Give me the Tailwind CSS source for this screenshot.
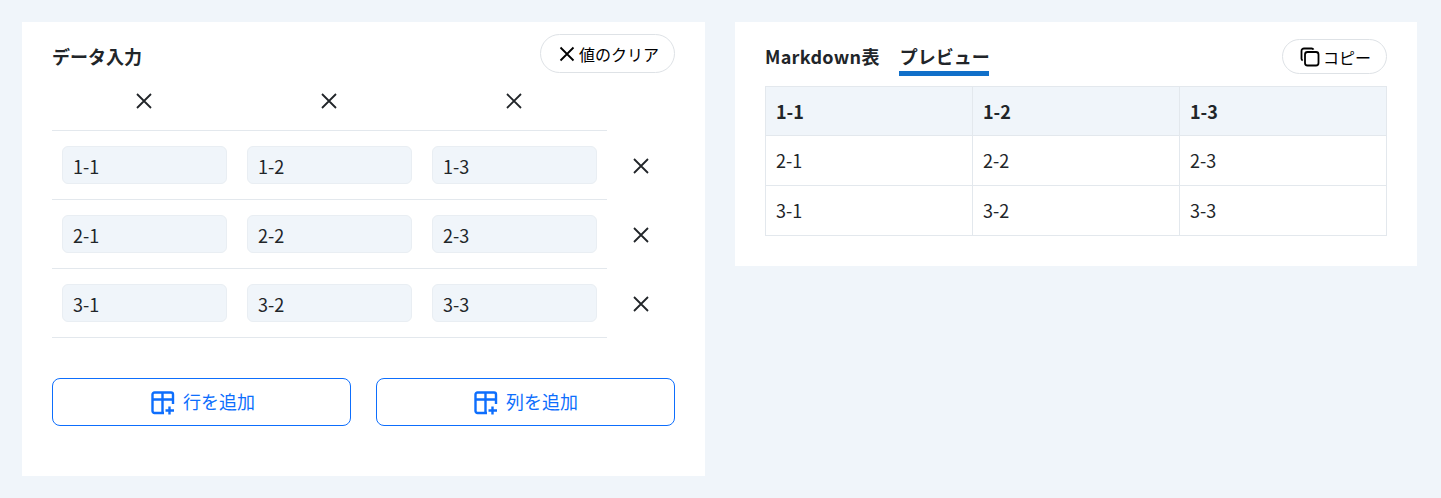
<!DOCTYPE html>
<html lang="ja">
<head>
<meta charset="utf-8">
<title>Markdown表</title>
<script src="https://cdn.jsdelivr.net/npm/@tailwindcss/browser@4"></script>
</head>
<body class="h-[498px] overflow-hidden bg-[#f0f5fa] font-['Noto_Sans_CJK_JP',sans-serif] text-[#212529]">
<main class="flex items-start gap-[30px] p-[22px]">

  <!-- data input -->
  <section class="h-[454px] w-[683px] bg-white px-[30px]">
    <div class="flex h-[65px] items-start justify-between">
      <h2 class="mt-[20px] text-[18px] leading-[28px] font-bold">データ入力</h2>
      <button type="button" class="mt-[12px] flex h-[39px] w-[135px] items-center justify-center gap-[3px] rounded-full border border-[#dee2e6] bg-white pl-[2px] text-[16px] text-black">
        <svg class="size-[18px]" viewBox="0 0 18 18" fill="none" stroke="currentColor" stroke-width="1.8"><path d="M2.5 2.5l13 13M15.5 2.5l-13 13"/></svg>
        値のクリア
      </button>
    </div>

    <div class="flex">
      <div class="w-[555px]">
        <div class="grid h-[44px] grid-cols-3 items-start border-b border-[#e3e8ed]">
          <span class="flex h-[30px] justify-center pt-[5px] pr-[1px]"><svg class="size-[18px] text-[#212529]" viewBox="0 0 18 18" fill="none" stroke="currentColor" stroke-width="1.8"><path d="M2 2l14 14M16 2L2 16"/></svg></span>
          <span class="flex h-[30px] justify-center pt-[5px] pr-[1px]"><svg class="size-[18px] text-[#212529]" viewBox="0 0 18 18" fill="none" stroke="currentColor" stroke-width="1.8"><path d="M2 2l14 14M16 2L2 16"/></svg></span>
          <span class="flex h-[30px] justify-center pt-[5px] pr-[1px]"><svg class="size-[18px] text-[#212529]" viewBox="0 0 18 18" fill="none" stroke="currentColor" stroke-width="1.8"><path d="M2 2l14 14M16 2L2 16"/></svg></span>
        </div>
        <div class="grid h-[69px] grid-cols-3 items-center gap-x-[20px] border-b border-[#e3e8ed] px-[10px]">
          <input value="1-1" class="h-[38px] w-full rounded-[6px] border border-[#e9eef3] bg-[#f0f5fa] px-[10px] pt-[2px] text-[18px] outline-none">
          <input value="1-2" class="h-[38px] w-full rounded-[6px] border border-[#e9eef3] bg-[#f0f5fa] px-[10px] pt-[2px] text-[18px] outline-none">
          <input value="1-3" class="h-[38px] w-full rounded-[6px] border border-[#e9eef3] bg-[#f0f5fa] px-[10px] pt-[2px] text-[18px] outline-none">
        </div>
        <div class="grid h-[69px] grid-cols-3 items-center gap-x-[20px] border-b border-[#e3e8ed] px-[10px]">
          <input value="2-1" class="h-[38px] w-full rounded-[6px] border border-[#e9eef3] bg-[#f0f5fa] px-[10px] pt-[2px] text-[18px] outline-none">
          <input value="2-2" class="h-[38px] w-full rounded-[6px] border border-[#e9eef3] bg-[#f0f5fa] px-[10px] pt-[2px] text-[18px] outline-none">
          <input value="2-3" class="h-[38px] w-full rounded-[6px] border border-[#e9eef3] bg-[#f0f5fa] px-[10px] pt-[2px] text-[18px] outline-none">
        </div>
        <div class="grid h-[69px] grid-cols-3 items-center gap-x-[20px] border-b border-[#e3e8ed] px-[10px]">
          <input value="3-1" class="h-[38px] w-full rounded-[6px] border border-[#e9eef3] bg-[#f0f5fa] px-[10px] pt-[2px] text-[18px] outline-none">
          <input value="3-2" class="h-[38px] w-full rounded-[6px] border border-[#e9eef3] bg-[#f0f5fa] px-[10px] pt-[2px] text-[18px] outline-none">
          <input value="3-3" class="h-[38px] w-full rounded-[6px] border border-[#e9eef3] bg-[#f0f5fa] px-[10px] pt-[2px] text-[18px] outline-none">
        </div>
      </div>
      <div class="flex w-[68px] flex-col pt-[44px]">
        <span class="flex h-[69px] items-center justify-center"><svg class="size-[18px]" viewBox="0 0 18 18" fill="none" stroke="currentColor" stroke-width="1.8"><path d="M2 2l14 14M16 2L2 16"/></svg></span>
        <span class="flex h-[69px] items-center justify-center"><svg class="size-[18px]" viewBox="0 0 18 18" fill="none" stroke="currentColor" stroke-width="1.8"><path d="M2 2l14 14M16 2L2 16"/></svg></span>
        <span class="flex h-[69px] items-center justify-center"><svg class="size-[18px]" viewBox="0 0 18 18" fill="none" stroke="currentColor" stroke-width="1.8"><path d="M2 2l14 14M16 2L2 16"/></svg></span>
      </div>
    </div>

    <div class="mt-[40px] flex justify-between">
      <button type="button" class="flex h-[48px] w-[299px] items-center justify-center gap-[8px] rounded-[8px] border border-[#0d6efd] pl-[2px] text-[18px] text-[#0d6efd]">
        <svg class="size-[25px]" viewBox="0 0 25 25" fill="none" stroke="currentColor" stroke-width="2.4"><path d="M14 23H4.5A2 2 0 0 1 2.5 21V4.5A2 2 0 0 1 4.5 2.5H21A2 2 0 0 1 23 4.5V14M2.5 9.5H23M12.5 2.5V23M19.5 16.5V24.5M15.5 20.5H24"/></svg>
        <span class="pb-[2px]">行を追加</span>
      </button>
      <button type="button" class="flex h-[48px] w-[299px] items-center justify-center gap-[8px] rounded-[8px] border border-[#0d6efd] text-[18px] text-[#0d6efd]">
        <svg class="size-[25px]" viewBox="0 0 25 25" fill="none" stroke="currentColor" stroke-width="2.4"><path d="M14 23H4.5A2 2 0 0 1 2.5 21V4.5A2 2 0 0 1 4.5 2.5H21A2 2 0 0 1 23 4.5V14M2.5 9.5H23M12.5 2.5V23M19.5 16.5V24.5M15.5 20.5H24"/></svg>
        <span class="pb-[2px]">列を追加</span>
      </button>
    </div>
  </section>

  <!-- preview -->
  <section class="h-[244px] w-[682px] bg-white px-[30px]">
    <div class="flex h-[64px] items-start justify-between">
      <div class="flex gap-[19px] pt-[20px] text-[18px] leading-[28px] font-bold whitespace-nowrap">
        <span class="h-[34px] tracking-[0.3px]">Markdown表</span>
        <span class="h-[34px] w-[90px] border-b-[5px] border-[#1170c9] pl-px">プレビュー</span>
      </div>
      <button type="button" class="mt-[17px] flex h-[35px] w-[105px] items-center justify-center gap-[3px] rounded-full border border-[#dee2e6] bg-white pl-[2px] text-[16px] text-black">
        <svg class="size-[20px]" viewBox="0 0 20 20" fill="none" stroke="currentColor" stroke-width="1.8"><rect x="5" y="5" width="13.5" height="13.5" rx="2.5"/><path d="M2.7 13.5A2 2 0 0 1 1.5 11.7V4A2.5 2.5 0 0 1 4 1.5H11.7A2 2 0 0 1 13.5 2.7"/></svg>
        コピー
      </button>
    </div>
    <table class="w-[622px] table-fixed border-collapse text-[18px]">
      <thead>
        <tr class="h-[49px] bg-[#f0f5fa] text-left">
          <th class="border border-[#e3e8ed] px-[10px] font-bold">1-1</th>
          <th class="border border-[#e3e8ed] px-[10px] font-bold">1-2</th>
          <th class="border border-[#e3e8ed] px-[10px] font-bold">1-3</th>
        </tr>
      </thead>
      <tbody>
        <tr class="h-[50px]">
          <td class="border border-[#e3e8ed] px-[10px]">2-1</td>
          <td class="border border-[#e3e8ed] px-[10px]">2-2</td>
          <td class="border border-[#e3e8ed] px-[10px]">2-3</td>
        </tr>
        <tr class="h-[50px]">
          <td class="border border-[#e3e8ed] px-[10px]">3-1</td>
          <td class="border border-[#e3e8ed] px-[10px]">3-2</td>
          <td class="border border-[#e3e8ed] px-[10px]">3-3</td>
        </tr>
      </tbody>
    </table>
  </section>
</main>
</body>
</html>
